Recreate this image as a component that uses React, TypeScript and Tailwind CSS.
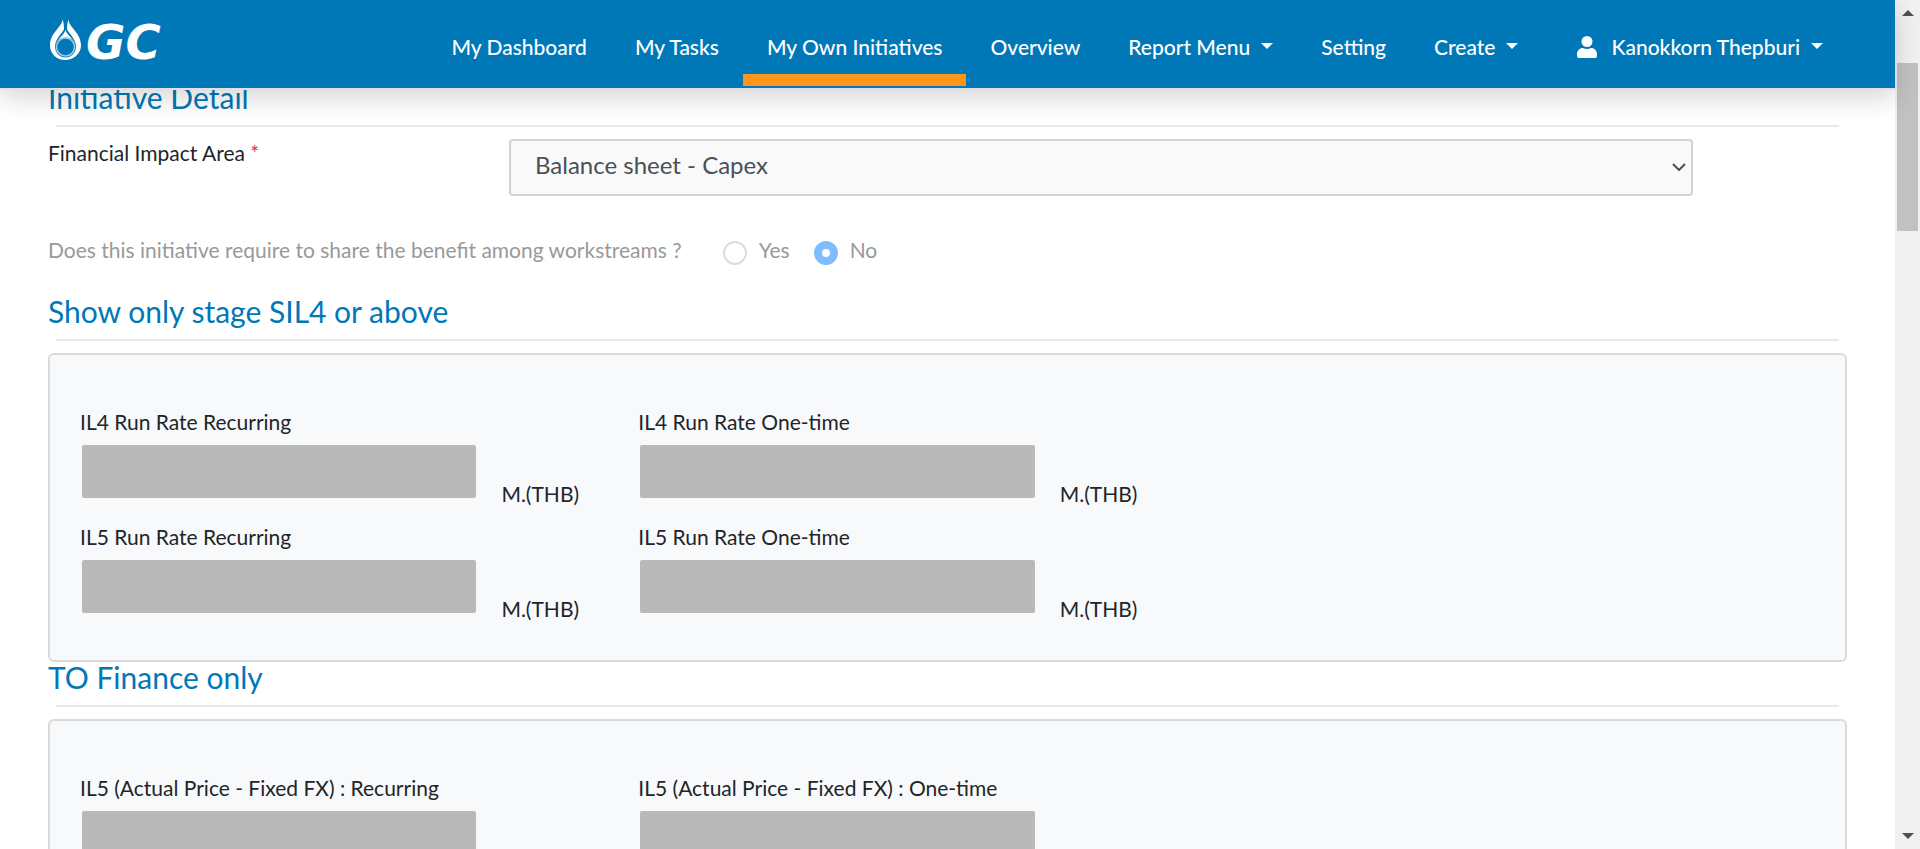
import React from "react";

const measures = {
  sil4: ["IL4 Run Rate Recurring", "IL4 Run Rate One-time", "IL5 Run Rate Recurring", "IL5 Run Rate One-time"],
  finance: ["IL5 (Actual Price - Fixed FX) : Recurring", "IL5 (Actual Price - Fixed FX) : One-time"],
};

function Caret() {
  return <span className="ml-[11px] mb-0.5 inline-block border-x-6 border-t-6 border-x-transparent border-t-white" />;
}

function Logo() {
  return (
    <a href="#" aria-label="GC" className="flex">
      <svg viewBox="0 0 130 44" className="h-11 w-[130px] overflow-visible" fill="none">
        <path
          d="M14.500 0C14.800 8 2 13 2 26.500C2 35 9 41 17 41S33 35 33 26.500C33 13 20 8 20.500 0C19.500 3 19 6 19 10C20 14 28 19 28 28A10.500 10.500 0 0 1 7 28C7 19 15 14 16 10C16 6 15.500 3 14.500 0Z"
          fill="#fff"
        />
        <path d="M17.500 11C16.500 16 9 20 7.500 25A11 11 0 0 1 27.500 25C26 20 18.500 16 17.500 11Z" fill="#fff" />
        <circle cx="17.500" cy="28" r="9" fill="#0078b8" stroke="#9fcbe5" strokeWidth="1.500" />
        <text x="38" y="40" fill="#fff" fontFamily="DejaVu Sans, sans-serif" fontWeight="700" fontStyle="italic" fontSize="48">
          GC
        </text>
      </svg>
    </a>
  );
}

function NavItem({ label, active, menu }: { label: string; active?: boolean; menu?: boolean }) {
  const look = active
    ? "flex items-center border-b-12 border-[#ff961b] px-6 pt-5"
    : "flex items-center border-b-12 border-transparent px-6 pt-5";
  return menu ? (
    <button type="button" className={look}>
      {label}
      <Caret />
    </button>
  ) : (
    <a href="#" className={look}>
      {label}
    </a>
  );
}

function Header() {
  return (
    <header className="relative z-10 flex h-[90px] shrink-0 justify-between border-b-2 border-[#dee2e6] bg-[#0078b8] px-12 shadow-[0_8px_24px_rgba(0,0,0,0.16)]">
      <div className="pt-[19px]">
        <Logo />
      </div>
      <nav className="mb-[2px] flex text-[21px] font-medium text-white">
        <NavItem label="My Dashboard" />
        <NavItem label="My Tasks" />
        <NavItem label="My Own Initiatives" active />
        <NavItem label="Overview" />
        <NavItem label="Report Menu" menu />
        <NavItem label="Setting" />
        <NavItem label="Create" menu />
        <button type="button" className="flex items-center border-b-12 border-transparent pt-5 pr-6 pl-[35px]">
          <svg viewBox="0 0 20 22" className="mr-[14px] h-[22px] w-5" fill="#fff">
            <circle cx="10" cy="5.500" r="5.500" />
            <path d="M0 20V18.500C0 14.500 2.500 12 6 12C7.200 12.600 8.600 13 10 13S12.800 12.600 14 12C17.500 12 20 14.500 20 18.500V20Q20 22 18 22H2Q0 22 0 20Z" />
          </svg>
          Kanokkorn Thepburi
          <Caret />
        </button>
      </nav>
    </header>
  );
}

function Heading({ children }: { children: React.ReactNode }) {
  return (
    <div className="mb-3">
      <h2 className="text-[30px] leading-[30px] text-[#0078b8]">{children}</h2>
      <hr className="mx-2 mt-[13px] border-t-2 border-[#e9e9e9]" />
    </div>
  );
}

function Field({ id, label }: { id: string; label: string }) {
  return (
    <div className="flex items-end">
      <div className="w-[71%] pb-[9px]">
        <label htmlFor={id} className="block text-[21px] leading-[30px] text-[#212529]">
          {label}
        </label>
        <div className="pt-2 pl-[2px]">
          <input id={id} disabled className="block h-[53px] w-full rounded-xs bg-[#b9b9b9]" />
        </div>
      </div>
      <span className="ml-[25px] text-[21px] leading-[26px] text-[#212529]">M.(THB)</span>
    </div>
  );
}

function Panel({ id, labels }: { id: string; labels: string[] }) {
  return (
    <section className="grid grid-cols-3 gap-y-[15px] rounded-md border-2 border-[#d8dadc] bg-[#f8f9fb] pt-[52px] pr-[90px] pb-[38px] pl-[30px]">
      {labels.map((label, i) => (
        <div key={label} className={i % 2 === 0 ? "col-start-1" : "col-start-2"}>
          <Field id={id + i} label={label} />
        </div>
      ))}
    </section>
  );
}

function Scrollbar() {
  return (
    <div aria-hidden="true" className="flex w-[25px] shrink-0 flex-col items-center justify-between bg-[#f0f0f0] py-[10px]">
      <div className="flex flex-col items-center gap-[47px]">
        <span className="border-x-6 border-b-6 border-x-transparent border-b-[#505050]" />
        <span className="h-[168px] w-[21px] bg-[#c1c1c1]" />
      </div>
      <span className="border-x-6 border-t-6 border-x-transparent border-t-[#505050]" />
    </div>
  );
}

const radio =
  "mt-[6px] h-6 w-6 appearance-none rounded-full border-2 border-[#d9dde2] bg-white checked:border-[8px] checked:border-[#80bdff]";

export default function App() {
  return (
    <div className="flex h-screen overflow-hidden bg-white font-['Lato',sans-serif]">
      <div className="flex min-w-0 flex-1 flex-col">
        <Header />
        <main className="-mt-2 min-h-0 flex-1 overflow-hidden px-12">
          <Heading>Initiative Detail</Heading>
          <div className="flex items-start">
            <label htmlFor="area" className="w-[461px] shrink-0 text-[21px] leading-7 text-[#212529]">
              Financial Impact Area <span className="text-[#dc3545]">*</span>
            </label>
            <div className="relative mr-[154px] flex-1">
              <select
                id="area"
                className="block h-[57px] w-full appearance-none rounded-sm border-2 border-[#ced4da] bg-[#f9f9f9] pb-[6px] pl-6 text-[24px] text-[#495057]"
              >
                <option>Balance sheet - Capex</option>
              </select>
              <svg viewBox="0 0 14 8" className="pointer-events-none absolute top-6 right-[7px] h-2 w-[14px]" fill="none">
                <path d="M1 1L7 7L13 1" stroke="#495057" strokeWidth="2" />
              </svg>
            </div>
          </div>
          <fieldset disabled className="mt-10 mb-8 flex h-7 items-center text-[21px] text-[#999]">
            <span>Does this initiative require to share the benefit among workstreams ?</span>
            <span className="ml-[41px] flex items-center gap-3">
              <input type="radio" id="yes" name="share" className={radio} />
              <label htmlFor="yes">Yes</label>
            </span>
            <span className="ml-6 flex items-center gap-3">
              <input type="radio" id="no" name="share" defaultChecked className={radio} />
              <label htmlFor="no">No</label>
            </span>
          </fieldset>
          <Heading>Show only stage SIL4 or above</Heading>
          <Panel id="sil4-" labels={measures.sil4} />
          <Heading>TO Finance only</Heading>
          <Panel id="finance-" labels={measures.finance} />
        </main>
      </div>
      <Scrollbar />
    </div>
  );
}
